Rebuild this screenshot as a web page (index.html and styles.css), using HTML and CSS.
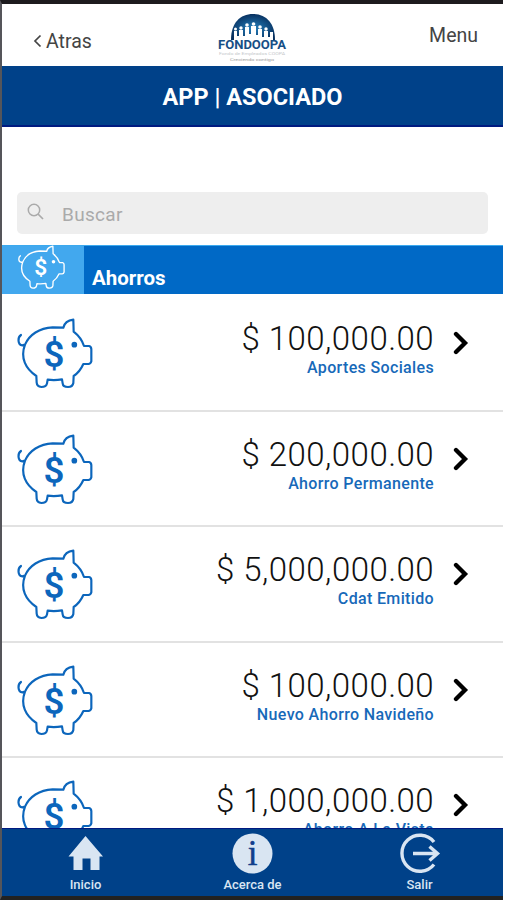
FILE: index.html
```html
<!DOCTYPE html>
<html lang="es">
<head>
  <meta charset="UTF-8">
  <meta name="viewport" content="width=device-width, initial-scale=1.0">
  <title>Fondoopa - App Asociado</title>
  <link rel="stylesheet" href="styles.css">
</head>
<body>
  <svg width="0" height="0" class="sprite">
    <symbol id="pig" viewBox="48 48 234 222">
      <path d="M63 105C52 112 53 135 67 136L75 134C88 104 118 84 158 82L190 83C193 70 205 61 220 59L221 95C235 106 246 119 252 138L267 138Q274 140 274 148L274 184Q272 192 265 192L250 192C243 208 233 220 221 228L220 249Q218 261 204 261Q189 261 188 250L186 238Q164 242 143 239L141 250Q139 261 124 261Q111 260 110 248L109 228C77 207 60 174 75 134" fill="none" stroke="currentColor" stroke-width="6.500" stroke-linejoin="round" stroke-linecap="round"/>
      <circle cx="223" cy="134" r="8.500" fill="currentColor"/>
      <text x="162" y="200" text-anchor="middle" class="pig-sign">$</text>
    </symbol>
  </svg>

  <div class="phone">
    <header class="topbar">
      <a class="back">
        <svg width="9" height="14" viewBox="0 0 9 14"><path d="M7.500 1.500L2 7l5.500 5.500" fill="none" stroke="#444" stroke-width="1.700"/></svg>
        <span>Atras</span>
      </a>
      <svg class="logo" width="72" height="52" viewBox="0 0 72 52">
        <defs>
          <radialGradient id="dome" cx="50%" cy="55%" r="55%">
            <stop offset="0" stop-color="#2580bd"/>
            <stop offset="1" stop-color="#07305f"/>
          </radialGradient>
        </defs>
        <path d="M14 28C14 11 23 2 36 2s22 9 22 26z" fill="url(#dome)"/>
        <path d="M17 28v-9h3v5h2v-6h4v6h2v-9h4v7h2v-8h5v9h2v-6h4v8h2v-6h4v6h2v-5h3v8z" fill="#fff"/>
        <g fill="#fff"><circle cx="18.500" cy="17" r="1.500"/><circle cx="24" cy="16" r="1.700"/><circle cx="30" cy="13" r="1.800"/><circle cx="36.500" cy="12" r="1.800"/><circle cx="43" cy="15" r="1.800"/><circle cx="49" cy="17" r="1.700"/></g>
        <text x="35" y="36.500" text-anchor="middle" textLength="68" lengthAdjust="spacingAndGlyphs" class="logo-name">FONDOOPA</text>
        <text x="35" y="42.500" text-anchor="middle" textLength="66" lengthAdjust="spacingAndGlyphs" class="logo-sub">Fondo de Empleados COOPA</text>
        <text x="35" y="49" text-anchor="middle" textLength="44" lengthAdjust="spacingAndGlyphs" class="logo-sub logo-motto">Creciendo contigo</text>
      </svg>
      <a class="menu">Menu</a>
    </header>

    <h1 class="title">APP | ASOCIADO</h1>

    <div class="search-area">
      <div class="search">
        <svg width="18" height="18" viewBox="0 0 18 18"><circle cx="7" cy="7" r="5.700" fill="none" stroke="#aaa" stroke-width="1.500"/><path d="M11 11l5 5" stroke="#aaa" stroke-width="1.700"/></svg>
        <span>Buscar</span>
      </div>
    </div>

    <div class="section">
      <div class="section-icon"><svg width="49" height="46"><use href="#pig"/></svg></div>
      <h2>Ahorros</h2>
    </div>

    <main class="list">
      <div class="row">
        <svg class="pig" width="78" height="74"><use href="#pig"/></svg>
        <div class="info">
          <div class="amount">$ 100,000.00</div>
          <div class="name">Aportes Sociales</div>
        </div>
        <svg class="arrow" width="16" height="24" viewBox="0 0 16 24"><path d="M3 3l9 9-9 9" /></svg>
      </div>
      <div class="row">
        <svg class="pig" width="78" height="74"><use href="#pig"/></svg>
        <div class="info">
          <div class="amount">$ 200,000.00</div>
          <div class="name">Ahorro Permanente</div>
        </div>
        <svg class="arrow" width="16" height="24" viewBox="0 0 16 24"><path d="M3 3l9 9-9 9" /></svg>
      </div>
      <div class="row">
        <svg class="pig" width="78" height="74"><use href="#pig"/></svg>
        <div class="info">
          <div class="amount">$ 5,000,000.00</div>
          <div class="name">Cdat Emitido</div>
        </div>
        <svg class="arrow" width="16" height="24" viewBox="0 0 16 24"><path d="M3 3l9 9-9 9" /></svg>
      </div>
      <div class="row">
        <svg class="pig" width="78" height="74"><use href="#pig"/></svg>
        <div class="info">
          <div class="amount">$ 100,000.00</div>
          <div class="name">Nuevo Ahorro Navideño</div>
        </div>
        <svg class="arrow" width="16" height="24" viewBox="0 0 16 24"><path d="M3 3l9 9-9 9" /></svg>
      </div>
      <div class="row">
        <svg class="pig" width="78" height="74"><use href="#pig"/></svg>
        <div class="info">
          <div class="amount">$ 1,000,000.00</div>
          <div class="name">Ahorro A La Vista</div>
        </div>
        <svg class="arrow" width="16" height="24" viewBox="0 0 16 24"><path d="M3 3l9 9-9 9" /></svg>
      </div>
    </main>

    <nav class="tabs">
      <a class="tab">
        <svg width="42" height="42" viewBox="0 0 42 42"><path d="M20.500 3L38 23.500h-3.500V37h-9V25.500h-8V37h-9V23.500H3.500z" fill="#d9e5f2"/></svg>
        <span>Inicio</span>
      </a>
      <a class="tab">
        <svg width="42" height="42" viewBox="0 0 42 42"><circle cx="20.500" cy="20.500" r="20" fill="#d9e5f2"/><text x="20.500" y="32" text-anchor="middle" class="info-sign">i</text></svg>
        <span>Acerca de</span>
      </a>
      <a class="tab">
        <svg width="42" height="42" viewBox="0 0 42 42"><path d="M35 9A18 18 0 1 0 35 31.500M14 20.500h24M30.500 13.500l8 7-8 7" fill="none" stroke="#d9e5f2" stroke-width="3.400"/></svg>
        <span>Salir</span>
      </a>
    </nav>
  </div>
</body>
</html>
```
FILE: styles.css
```css
* {
  margin: 0;
  padding: 0;
  box-sizing: border-box;
}

body {
  font-family: Roboto, sans-serif;
  background: #fff;
  overflow: hidden;
}

.sprite {
  display: none;
}

.phone {
  width: 503px;
  height: 900px;
  display: flex;
  flex-direction: column;
  border-top: 4px solid #1d1b1e;
  border-bottom: 4px solid #222;
  border-left: 2px solid #55555a;
  overflow: hidden;
}

.topbar {
  height: 62px;
  flex: none;
  display: grid;
  grid-template-columns: 1fr 72px 1fr;
  color: #444;
  font-size: 19.500px;
}

.back {
  display: flex;
  align-items: center;
  gap: 4px;
  padding: 13px 0 0 31px;
}

.back svg {
  margin-top: -2px;
}

.logo {
  margin-top: 8px;
}

.logo-name {
  font-size: 12.500px;
  font-weight: 700;
  fill: #174f86;
}

.logo-sub {
  font-size: 4px;
  fill: #c5c8cb;
}

.logo-motto {
  fill: #999;
}

.menu {
  justify-self: end;
  padding: 20px 25px 0 0;
}

.title {
  height: 61px;
  flex: none;
  background: #004189;
  border-bottom: 2px solid #001a80;
  color: #fff;
  font-size: 23.500px;
  font-weight: 700;
  line-height: 63px;
  text-align: center;
}

.search-area {
  height: 118px;
  flex: none;
  padding: 65px 15px 0;
}

.search {
  height: 42px;
  display: flex;
  align-items: center;
  gap: 17px;
  padding-left: 10px;
  background: #eee;
  border-radius: 5px;
  color: #aaa;
  font-size: 19px;
  letter-spacing: 0.300px;
}

.search svg {
  margin-top: -2px;
}

.search span {
  padding-top: 2px;
}

.section {
  height: 49px;
  flex: none;
  display: flex;
  background: #0069c6;
  border-top: 1px solid #3ba9ee;
  color: #fff;
}

.section-icon {
  width: 82px;
  padding-left: 15px;
  background: #42a8ee;
}

.section-icon svg {
  display: block;
  margin-top: -2px;
}

.section h2 {
  padding: 19px 0 0 8px;
  font-size: 20.500px;
  font-weight: 700;
  line-height: 26px;
}

.pig-sign {
  font-family: Roboto, sans-serif;
  font-size: 110px;
  font-weight: 600;
  fill: currentColor;
}

.list {
  flex: 1;
  min-height: 0;
  padding-top: 2px;
  overflow: hidden;
}

.row {
  height: 115.600px;
  display: flex;
  padding: 20px 34px 0 14px;
  border-bottom: 2px solid #e2e2e2;
}

.pig {
  color: #0c66bc;
}

.info {
  flex: 1;
  text-align: right;
}

.amount {
  color: #111;
  font-size: 33px;
  font-weight: 300;
  line-height: 46px;
  letter-spacing: 0.450px;
  margin-right: 1px;
}

.name {
  color: #1769b9;
  font-size: 16px;
  font-weight: 500;
  line-height: 20px;
  margin: -4px 1px 0 0;
  letter-spacing: 0.350px;
}

.arrow {
  margin: 15px 0 0 18px;
  fill: none;
  stroke: #000;
  stroke-width: 4.300;
  stroke-linecap: round;
}

.tabs {
  height: 68px;
  flex: none;
  display: grid;
  grid-template-columns: repeat(3, 1fr);
  background: #004189;
  border-top: 1px solid #001a80;
}

.tab {
  display: flex;
  flex-direction: column;
  align-items: center;
  padding-top: 4px;
  color: #d9e5f2;
  font-size: 13px;
  font-weight: 500;
  line-height: 20px;
}

.info-sign {
  font-family: "Liberation Serif", serif;
  font-size: 35px;
  fill: #123f8c;
  stroke: #123f8c;
  stroke-width: 0.500;
}
```
